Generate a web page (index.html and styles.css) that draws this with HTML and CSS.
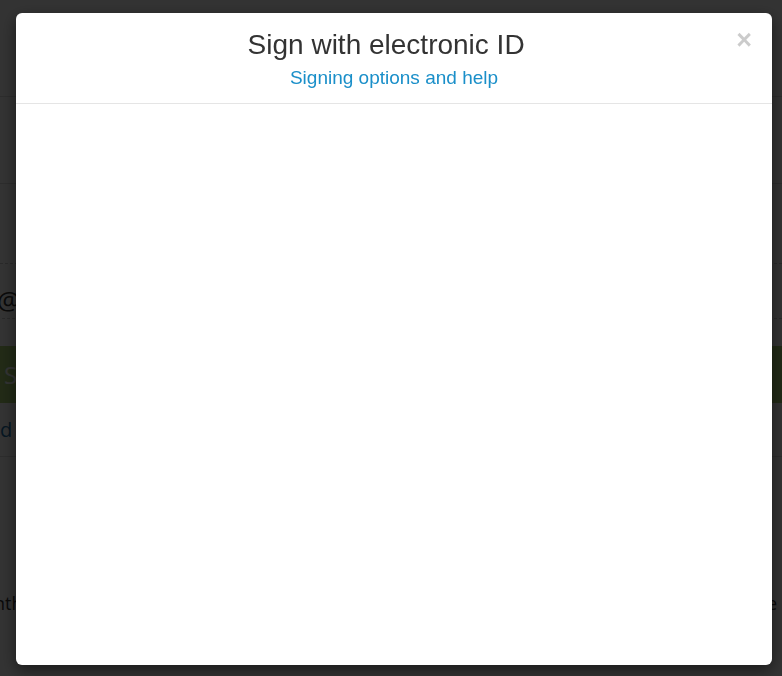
FILE: index.html
```html
<!DOCTYPE html>
<html lang="en">
<head>
    <meta charset="UTF-8">
    <meta name="viewport" content="width=device-width, initial-scale=1.0">
    <title>Sign with electronic ID</title>
    <link rel="stylesheet" href="styles.css">
</head>
<body>
    <div class="page">
        <div class="page-header"></div>
        <div class="page-row"></div>
        <div class="page-row dashed"></div>
        <div class="page-row email dashed">@a</div>
        <div class="page-btn">Sign</div>
        <div class="page-link">Add company</div>
        <div class="page-foot">
            <span>Monthly</span>
            <span>Free</span>
        </div>
    </div>

    <div class="backdrop"></div>

    <div class="modal">
        <div class="modal-header">
            <button class="close" type="button">&times;</button>
            <h4 class="modal-title">Sign with electronic ID</h4>
            <a class="modal-help" href="#">Signing options and help</a>
        </div>
        <div class="modal-body"></div>
    </div>
</body>
</html>
```

FILE: styles.css
```css
html, body {
    margin: 0;
    padding: 0;
    height: 100%;
    overflow: hidden;
}

body {
    font-family: "Liberation Sans", Arial, sans-serif;
    background: #fff;
    color: #333;
}

/* page behind the dialog */
.page {
    font-family: "Open Sans", sans-serif;
}

.page-header {
    height: 96px;
    border-bottom: 1px solid #ddd;
}

.page-row {
    height: 86px;
    border-bottom: 1px solid #ddd;
}

.page-row.dashed {
    height: 79px;
    border-bottom: 1px dashed #ccc;
}

.page-row.email {
    height: 54px;
    line-height: 72px;
    font-size: 26px;
    margin-left: -3px;
}

.page-btn {
    margin-top: 27px;
    height: 57px;
    line-height: 57px;
    background: #a8d070;
    color: #fff;
    font-size: 24px;
    padding-left: 4px;
}

.page-link {
    height: 53px;
    line-height: 53px;
    border-bottom: 1px solid #ddd;
    color: #1b6fa8;
    font-size: 20px;
    margin-left: -25px;
}

.page-foot {
    margin-top: 134px;
    display: flex;
    justify-content: space-between;
    font-size: 18px;
    margin-left: -33px;
    margin-right: 5px;
}

/* dialog */
.backdrop {
    position: fixed;
    inset: 0;
    background: rgba(0, 0, 0, 0.8);
}

.modal {
    position: fixed;
    top: 13px;
    left: 16px;
    width: 756px;
    height: 652px;
    background: #fff;
    border-radius: 6px;
    box-shadow: 0 5px 15px rgba(0, 0, 0, 0.5);
    display: flex;
    flex-direction: column;
}

.modal-header {
    padding: 16px 15px 13px;
    border-bottom: 1px solid #e5e5e5;
    text-align: center;
}

.modal-title {
    margin: 0;
    font-size: 28px;
    font-weight: normal;
    line-height: 32px;
    color: #333;
}

.modal-help {
    display: block;
    margin-top: 5px;
    font-size: 19px;
    line-height: 24px;
    color: #1a8fc9;
    text-decoration: none;
}

.close {
    float: right;
    margin: -2px 5px 0 -5px;
    padding: 0;
    border: none;
    background: none;
    font-family: "Liberation Sans", Arial, sans-serif;
    font-size: 27px;
    font-weight: bold;
    line-height: 1;
    color: #000;
    opacity: 0.2;
    cursor: pointer;
}

.modal-body {
    flex: 1;
}
```
